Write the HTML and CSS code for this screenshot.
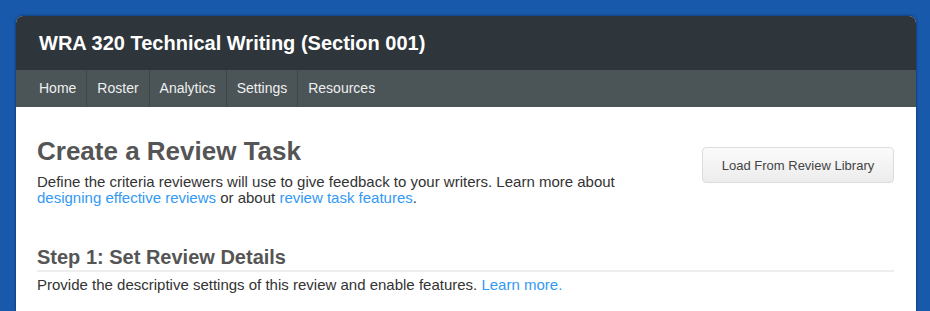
FILE: index.html
```html
<!DOCTYPE html>
<html>
<head>
<meta charset="utf-8">
<link rel="stylesheet" href="styles.css">
</head>
<body>
<div class="card">
  <header class="course-header">
    <h1 class="course-title">WRA 320 Technical Writing (Section 001)</h1>
  </header>
  <nav class="course-nav">
    <a class="nav-item" href="#">Home</a>
    <a class="nav-item" href="#">Roster</a>
    <a class="nav-item" href="#">Analytics</a>
    <a class="nav-item" href="#">Settings</a>
    <a class="nav-item nav-last" href="#">Resources</a>
  </nav>
  <main class="content">
    <div class="intro">
      <div class="intro-text">
        <h2 class="page-title">Create a Review Task</h2>
        <p class="lead">Define the criteria reviewers will use to give feedback to your writers. Learn more about<br><a href="#">designing effective reviews</a> or about <a href="#">review task features</a>.</p>
      </div>
      <button class="btn">Load From Review Library</button>
    </div>
    <section class="step">
      <h3 class="step-title">Step 1: Set Review Details</h3>
      <p class="step-desc">Provide the descriptive settings of this review and enable features. <a href="#">Learn more.</a></p>
    </section>
  </main>
</div>
</body>
</html>
```
FILE: styles.css
```css
html, body {
  margin: 0;
  padding: 0;
}
body {
  background: #1859ab;
  font-family: "Liberation Sans", Arial, Helvetica, sans-serif;
  padding: 16px 14px 0 16px;
  height: 311px;
  box-sizing: border-box;
  overflow: hidden;
}
.card {
  width: 900px;
  border-radius: 7px 7px 0 0;
  overflow: hidden;
  background: #fff;
  box-shadow: 0 0 3px rgba(0, 0, 0, 0.55);
  height: 295px;
}
.course-header {
  background: #2e353b;
  height: 54px;
  display: flex;
  align-items: center;
  padding: 0 23px;
}
.course-title {
  margin: 0;
  color: #fff;
  font-size: 20px;
  font-weight: bold;
}
.course-nav {
  background: #4b5457;
  height: 37px;
  display: flex;
  padding-left: 13px;
}
.nav-item {
  color: #eef0f0;
  text-decoration: none;
  font-size: 14px;
  line-height: 37px;
  padding: 0 10px;
  border-right: 1px solid #3e4649;
}
.nav-last {
  border-right: none;
}
.content {
  padding: 0 22px 0 21px;
}
.intro {
  display: flex;
  justify-content: space-between;
  align-items: flex-start;
  padding-top: 29px;
}
.page-title {
  margin: 0;
  color: #555;
  font-size: 26px;
  font-weight: bold;
  line-height: 30px;
}
.lead {
  margin: 8px 0 0;
  color: #333;
  font-size: 15px;
  line-height: 16px;
}
a {
  color: #3399f3;
  text-decoration: none;
}
.btn {
  margin-top: 11px;
  width: 192px;
  height: 36px;
  border: 1px solid #dcdcdc;
  border-radius: 4px;
  background: linear-gradient(#fbfbfb, #ececec);
  color: #444;
  font-family: "Liberation Sans", Arial, sans-serif;
  font-size: 13px;
  padding: 0;
}
.step {
  margin-top: 39px;
}
.step-title {
  margin: 0;
  color: #555;
  font-size: 20px;
  font-weight: bold;
  line-height: 24px;
  padding-bottom: 1px;
  border-bottom: 2px solid #eeeeee;
}
.step-desc {
  margin: 5px 0 0;
  color: #333;
  font-size: 15px;
  line-height: 16px;
}
```
